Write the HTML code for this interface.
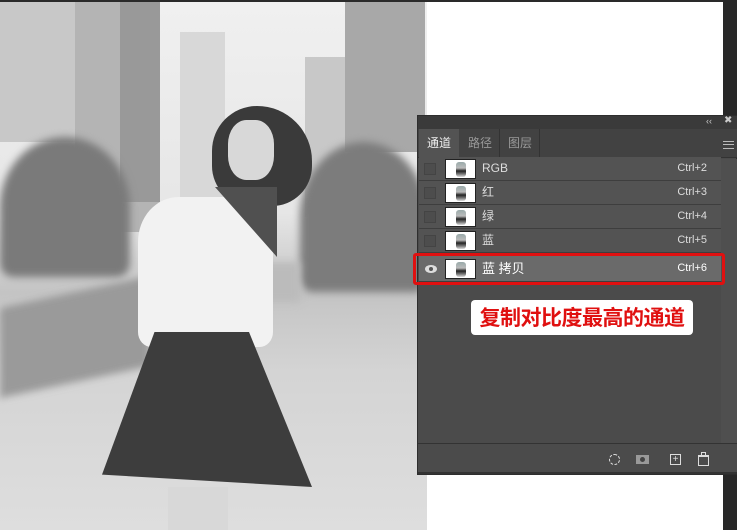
<!DOCTYPE html>
<html><head><meta charset="utf-8"><style>
*{margin:0;padding:0;box-sizing:border-box}
body{width:737px;height:530px;overflow:hidden;background:#fff;position:relative;font-family:"Liberation Sans","Noto Sans CJK SC",sans-serif}
.abs{position:absolute}
.bl{filter:blur(4px)}
.row{position:absolute;left:419px;width:302px;height:24px;background:#535353;border-bottom:1px solid #3e3e3e;color:#ddd;font-size:12px;line-height:23px}
.row .cb{position:absolute;left:5px;top:6px;width:12px;height:12px;border:1px solid #444;background:#4d4d4d}
.row .th{position:absolute;left:26px;top:2px;width:31px;height:20px;background:#fff;border:1px solid #222;overflow:hidden}
.row .th i{position:absolute;left:10px;top:2px;width:10px;height:15px;background:linear-gradient(#9aa 0,#bbb 40%,#222 60%,#777 80%,#ddd 100%);border-radius:3px}
.row .nm{position:absolute;left:63px;top:0}
.row .sc{position:absolute;right:14px;top:0;font-size:11px}
</style></head><body>
<div class="abs" style="left:0;top:0;width:737px;height:2px;background:#2a2a2a"></div>
<div class="abs" style="left:723px;top:0;width:14px;height:530px;background:#282828"></div>
<!-- photo -->
<div class="abs" style="left:0;top:2px;width:427px;height:528px;background:linear-gradient(#f0f0f0 0,#e6e6e6 40%,#c4c4c4 55%,#d4d4d4 70%,#dedede 100%);overflow:hidden">
 <div class="abs" style="left:0;top:0;width:75px;height:140px;background:#c8c8c8"></div>
 <div class="abs" style="left:75px;top:0;width:85px;height:230px;background:#b4b4b4"></div>
 <div class="abs" style="left:120px;top:0;width:40px;height:200px;background:#999"></div>
 <div class="abs" style="left:180px;top:30px;width:45px;height:190px;background:#d8d8d8"></div>
 <div class="abs" style="left:305px;top:55px;width:40px;height:160px;background:#c8c8c8"></div>
 <div class="abs" style="left:345px;top:0;width:80px;height:150px;background:#a8a8a8"></div>
 <div class="abs bl" style="left:0;top:135px;width:130px;height:140px;background:#7a7a7a;border-radius:50% 50% 10% 10%"></div>
 <div class="abs bl" style="left:300px;top:140px;width:127px;height:150px;background:#7c7c7c;border-radius:50% 50% 10% 10%"></div>
 <div class="abs bl" style="left:0;top:290px;width:150px;height:90px;background:#9a9a9a;transform:skewY(-12deg)"></div>
 <div class="abs bl" style="left:260px;top:260px;width:40px;height:40px;background:#bbb"></div>
 <div class="abs" style="left:212px;top:104px;width:100px;height:100px;background:#3a3a3a;border-radius:45% 55% 40% 40%"></div>
 <div class="abs" style="left:228px;top:118px;width:46px;height:60px;background:#d8d8d8;border-radius:40%"></div>
 <div class="abs" style="left:138px;top:195px;width:135px;height:150px;background:#f2f2f2;border-radius:30% 30% 10% 10%"></div>
 <div class="abs" style="left:215px;top:185px;width:62px;height:70px;background:#505050;clip-path:polygon(0 0,100% 0,100% 100%,30% 30%)"></div>
 <div class="abs" style="left:102px;top:330px;width:210px;height:155px;background:#3d3d3d;clip-path:polygon(25% 0,70% 0,100% 100%,0 92%)"></div>
 <div class="abs" style="left:168px;top:485px;width:60px;height:45px;background:#d8d8d8"></div>
</div>
<!-- panel -->
<div class="abs" style="left:417px;top:115px;width:320px;height:360px;background:#4b4b4b;border:1px solid #2e2e2e">
 <div class="abs" style="left:0;top:0;width:320px;height:13px;background:#3a3a3a"></div>
 <div class="abs" style="left:288px;top:0;color:#ccc;font-size:9px">‹‹</div>
 <div class="abs" style="left:306px;top:-1px;color:#ccc;font-size:10px">✖</div>
 <div class="abs" style="left:0;top:13px;width:320px;height:29px;background:#424242;border-bottom:1px solid #333"></div>
 <div class="abs" style="left:1px;top:13px;width:40px;height:29px;background:#535353;color:#eee;font-size:12px;line-height:28px;padding-left:8px">通道</div>
 <div class="abs" style="left:42px;top:13px;width:40px;height:28px;border-right:1px solid #333;color:#999;font-size:12px;line-height:28px;padding-left:8px">路径</div>
 <div class="abs" style="left:82px;top:13px;width:40px;height:28px;border-right:1px solid #333;color:#999;font-size:12px;line-height:28px;padding-left:8px">图层</div>
 <div class="abs" style="left:305px;top:25px;width:11px;height:8px;border-top:1px solid #bbb;border-bottom:1px solid #bbb"><div style="margin-top:2px;height:1px;background:#bbb"></div></div>
 <div class="abs" style="left:303px;top:43px;width:16px;height:284px;background:#4f4f4f"></div>
 <div class="abs" style="left:0;top:327px;width:320px;height:31px;background:#4b4b4b;border-top:1px solid #333;border-bottom:2px solid #333"></div>
</div>
<div class="row" style="top:157px"><div class="cb"></div><div class="th"><i></i></div><div class="nm">RGB</div><div class="sc">Ctrl+2</div></div>
<div class="row" style="top:181px"><div class="cb"></div><div class="th"><i></i></div><div class="nm">红</div><div class="sc">Ctrl+3</div></div>
<div class="row" style="top:205px"><div class="cb"></div><div class="th"><i></i></div><div class="nm">绿</div><div class="sc">Ctrl+4</div></div>
<div class="row" style="top:229px"><div class="cb"></div><div class="th"><i></i></div><div class="nm">蓝</div><div class="sc">Ctrl+5</div></div>
<div class="row" style="top:256px;height:26px;background:#6a6a6a;color:#fff;line-height:25px"><div class="abs" style="left:6px;top:9px;width:12px;height:8px;border-radius:50%;background:#ddd"><div style="width:4px;height:4px;margin:2px auto;background:#555;border-radius:50%"></div></div><div class="th" style="top:3px"><i></i></div><div class="nm" style="font-size:13px">蓝 拷贝</div><div class="sc">Ctrl+6</div></div>
<div class="abs" style="left:413px;top:253px;width:312px;height:32px;border:3px solid #e01010;border-radius:3px"></div>
<div class="abs" style="left:471px;top:300px;width:222px;height:35px;background:#fff;border-radius:4px;color:#e01010;font-weight:bold;font-size:21px;line-height:35px;text-align:center;font-family:'Noto Sans CJK SC',sans-serif;letter-spacing:-0.5px">复制对比度最高的通道</div>
<!-- footer icons -->
<div class="abs" style="left:609px;top:454px;width:11px;height:11px;border:1px dashed #ddd;border-radius:50%"></div>
<div class="abs" style="left:636px;top:455px;width:13px;height:9px;background:#999"><div style="width:5px;height:5px;margin:2px auto;background:#444;border-radius:50%"></div></div>
<div class="abs" style="left:670px;top:454px;width:11px;height:11px;border:1px solid #ddd;color:#ddd;font-size:10px;line-height:9px;text-align:center">+</div>
<div class="abs" style="left:698px;top:455px;width:11px;height:11px;border:1px solid #ddd;border-top:2px solid #ddd"></div>
<div class="abs" style="left:701px;top:452px;width:5px;height:3px;border:1px solid #ddd;border-bottom:none"></div>
</body></html>
